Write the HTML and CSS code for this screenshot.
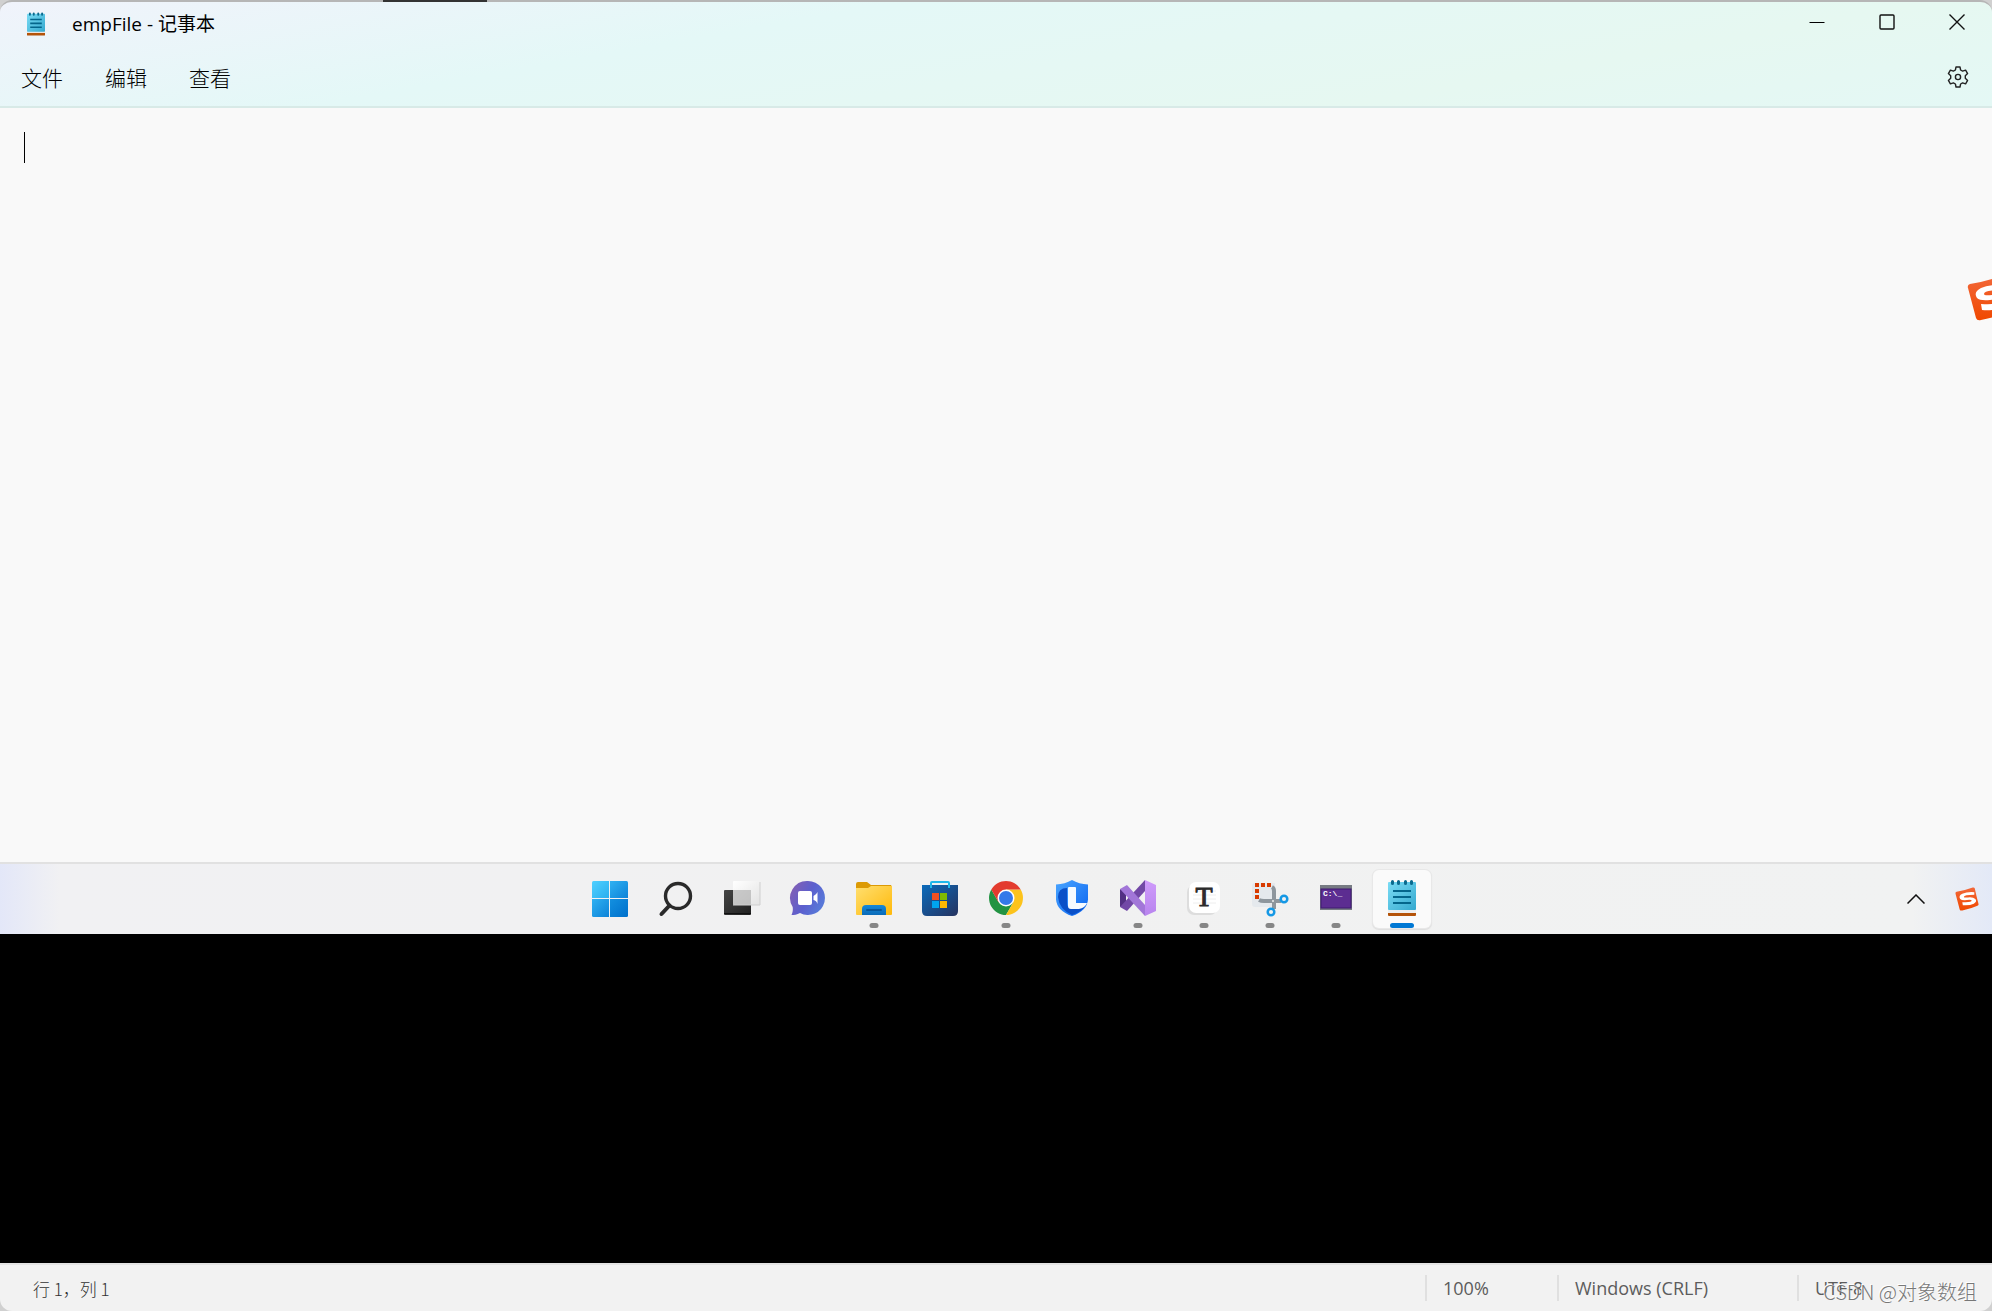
FILE: index.html
```html
<!DOCTYPE html>
<html lang="zh-CN">
<head>
  <meta charset="UTF-8" />
  <meta name="viewport" content="width=device-width, initial-scale=1" />
  <title>empFile - 记事本</title>
  <link rel="stylesheet" href="styles.css">
</head>
<body>

  <div class="desktop-peek"></div>

  <div class="window">
    <header class="header">
      <div class="titlebar">
        <svg class="app-icon" viewBox="0 0 28 36" aria-hidden="true">
          <rect x="0" y="31" width="28" height="5" rx="1" fill="#b45309"/>
          <rect x="0" y="28" width="28" height="4" fill="#e9e4e0"/>
          <rect x="0" y="2" width="28" height="28" rx="1" fill="url(#noteBlue)"/>
          <path d="M4.500 1.500v2M10.500 1.500v2M17.500 1.500v2M23.500 1.500v2" stroke="#0b6a8e" stroke-width="3" stroke-linecap="round"/>
          <path d="M5 11h18M5 17h18M5 23h18" stroke="#04668c" stroke-width="2.500"/>
        </svg>
        <span class="title">empFile - 记事本</span>
        <div class="controls">
          <button class="control" aria-label="最小化">
            <svg width="16" height="16" viewBox="0 0 16 16"><path d="M0.500 8.500h15" stroke="#000"/></svg>
          </button>
          <button class="control" aria-label="最大化">
            <svg width="16" height="16" viewBox="0 0 16 16"><rect x="1" y="1" width="14" height="14" rx="1" fill="none" stroke="#111" stroke-width="1.400"/></svg>
          </button>
          <button class="control" aria-label="关闭">
            <svg width="16" height="16" viewBox="0 0 16 16"><path d="M0.500 0.500l15 15M15.500 0.500l-15 15" stroke="#111" stroke-width="1.400"/></svg>
          </button>
        </div>
      </div>
      <nav class="menubar">
        <button class="menu">文件</button>
        <button class="menu">编辑</button>
        <button class="menu">查看</button>
        <button class="settings" aria-label="设置">
          <svg width="22" height="22" viewBox="0 0 22 22" fill="none" stroke="#222" stroke-width="1.400" stroke-linejoin="round">
            <path d="M9 1h4l.6 3 2 1.100 3-1 2 3.500-2.300 2.100v2.600l2.300 2.100-2 3.500-3-1-2 1.100L13 21H9l-.6-3-2-1.100-3 1-2-3.500 2.300-2.100V9.700L1.400 7.600l2-3.500 3 1 2-1.100z"/>
            <circle cx="11" cy="11" r="2.600"/>
          </svg>
        </button>
      </nav>
    </header>

    <main class="editor">
      <span class="caret"></span>
      <textarea class="text" aria-label="文本编辑器" spellcheck="false"></textarea>
      <svg class="ime-float" viewBox="0 0 46 46" aria-hidden="true"><use href="#sogou"/></svg>
    </main>

    <div class="taskbar">
      <div class="apps">
        <button class="app" aria-label="开始">
          <svg viewBox="0 0 36 36">
            <path d="M0 1.500Q0 0 1.500 0H17v17H0z" fill="url(#win1)"/>
            <path d="M18 0h16.500Q36 0 36 1.500V17H18z" fill="url(#win2)"/>
            <path d="M0 18h17v18H1.500Q0 36 0 34.500z" fill="url(#win2)"/>
            <path d="M18 18h18v16.500q0 1.500-1.500 1.500H18z" fill="url(#win3)"/>
          </svg>
        </button>
        <button class="app" aria-label="搜索">
          <svg viewBox="0 0 36 36" fill="none" stroke="#2a2a2a">
            <circle cx="20" cy="15" r="12.500" stroke-width="3.400"/>
            <path d="M11.500 24.500L3.500 33" stroke-width="4" stroke-linecap="round"/>
          </svg>
        </button>
        <button class="app" aria-label="任务视图">
          <svg viewBox="0 0 36 36">
            <rect x="0" y="9" width="27" height="25" rx="1" fill="url(#taskDark)"/>
            <path d="M0 32.500h27" stroke="#111"/>
            <rect x="9" y="0" width="27" height="24" rx="1" fill="url(#taskLight)"/>
            <path d="M9 9h18v15H9z" fill="#999" opacity=".5"/>
            <path d="M9 24h27V1" fill="none" stroke="#cfcfcf"/>
          </svg>
        </button>
        <button class="app" aria-label="聊天">
          <svg viewBox="0 0 36 36">
            <path d="M18 0a17 17 0 1 1-8 32c-3 1.800-6 2-8.500 2 1.300-3 1.600-5 1.200-8A17 17 0 0 1 18 0z" fill="url(#chat)"/>
            <rect x="8" y="10" width="14" height="14" rx="2" fill="#fff"/>
            <path d="M23.500 15q3-1.500 4-4v12q-1-3.500-4-4z" fill="#fff"/>
          </svg>
        </button>
        <button class="app running" aria-label="文件资源管理器">
          <svg viewBox="0 0 36 36">
            <path d="M0 8V3q0-2 2-2h9l4 3h20l1 2v4z" fill="#dc9a05"/>
            <path d="M0 7h12l3-2h21v28q0 1-1 1H1q-1 0-1-1z" fill="url(#folder)"/>
            <path d="M6 34v-6q0-4 4-4h16q4 0 4 4v6z" fill="url(#folderBlue)"/>
            <path d="M11 29h14" stroke="#07579b" stroke-width="2" stroke-linecap="round"/>
          </svg>
        </button>
        <button class="app" aria-label="应用商店">
          <svg viewBox="0 0 36 36">
            <path d="M0 4h36v26q0 5-5 5H5q-5 0-5-5z" fill="url(#store)"/>
            <path d="M9 7V2q0-1 1-1h16q1 0 1 1v5" fill="none" stroke="#20b7ea" stroke-width="2"/>
            <path d="M10 12h7v7h-7z" fill="#f25022"/>
            <path d="M18 12h7v7h-7z" fill="#7fba00"/>
            <path d="M10 20h7v7h-7z" fill="#00a4ef"/>
            <path d="M18 20h7v7h-7z" fill="#ffb900"/>
          </svg>
        </button>
        <button class="app running" aria-label="Chrome">
          <svg viewBox="0 0 36 36">
            <path d="M3.300 8.500L10.600 21.300 18 17l7.400 4.200L18 34A17 17 0 0 1 3.300 8.500z" fill="#229342"/>
            <path d="M25.400 21.200L18 34A17 17 0 0 0 32.700 8.500H18V17z" fill="#fcc31c"/>
            <path d="M18 17L10.500 21.300 3.300 8.500A17 17 0 0 1 32.700 8.500H18z" fill="#e33b2e"/>
            <circle cx="18" cy="17" r="8.500" fill="#fff"/>
            <circle cx="18" cy="17" r="7" fill="#3479e9"/>
          </svg>
        </button>
        <button class="app" aria-label="电脑管家">
          <svg viewBox="0 0 36 36">
            <path d="M18-1q7 4 16 4.500v15Q33 30 18 35 3 30 2 18.500v-15Q11 3 18-1z" fill="url(#shield)"/>
            <path d="M13 7Q4 7 4 16q1 12 14 18 10-3 14-11l-14 4q-5 1-5-5z" fill="#0a50c8"/>
            <path d="M14 7q0-1 1-1h6q1 0 1 1v15h11q-2 5-8 6h-8q-3 0-3-3z" fill="#f5faff"/>
          </svg>
        </button>
        <button class="app running" aria-label="Visual Studio">
          <svg viewBox="0 0 36 36">
            <path d="M0 8l6 3v13l-6 2z" fill="#533083"/>
            <path d="M0 26L25-1v11L7 30z" fill="#7248a6"/>
            <path d="M0 8l7-4 18 20v11z" fill="#a276d8"/>
            <path d="M25-1l11 5v26l-11 5z" fill="url(#vs)"/>
          </svg>
        </button>
        <button class="app running" aria-label="Typora">
          <svg viewBox="0 0 36 36">
            <rect x="1" y="4" width="30" height="30" rx="7" fill="#ddd"/>
            <rect x="3" y="1" width="31" height="31" rx="7" fill="#fff"/>
            <path d="M7 10h23M7 14h23M7 18h23M7 22h23" stroke="#eee"/>
            <text class="glyph" x="18" y="25" text-anchor="middle">T</text>
          </svg>
        </button>
        <button class="app running" aria-label="截图工具">
          <svg viewBox="0 0 36 36">
            <path d="M0 5q0-3 3-3h20v24H3q-3 0-3-3z" fill="#e5e9ed"/>
            <path d="M3 2h4v4H3zM9 2h4v4H9zM15 2h4v4h-4zM3 8h4v4H3zM3 14h4v4H3z" fill="#d83b01"/>
            <path d="M20 6q2 1 2 4v18M7 19q2 1 5 1h17" fill="none" stroke="#8e969d" stroke-width="4"/>
            <circle cx="21" cy="20" r="1" fill="#eee"/>
            <circle cx="32" cy="18" r="3.300" fill="none" stroke="#1598e5" stroke-width="2.500"/>
            <circle cx="19" cy="31" r="3.300" fill="none" stroke="#1598e5" stroke-width="2.500"/>
          </svg>
        </button>
        <button class="app running" aria-label="命令提示符">
          <svg viewBox="0 0 36 36">
            <rect x="2" y="4" width="32" height="25" fill="#777b83"/>
            <rect x="3" y="8" width="30" height="19" fill="#5c2d91" stroke="#3e1b70"/>
            <text class="prompt" x="5" y="15">C:\_</text>
          </svg>
        </button>
        <button class="app running active" aria-label="记事本">
          <svg viewBox="-4 0 36 36">
            <rect x="0" y="30" width="28" height="5" rx="1" fill="#b45309"/>
            <rect x="0" y="28" width="28" height="4" fill="#eee"/>
            <rect x="0" y="1" width="28" height="28" rx="1" fill="url(#noteBlue)"/>
            <path d="M4.500 0.500v2M10.500 0.500v2M17.500 0.500v2M23.500 0.500v2" stroke="#0b6a8e" stroke-width="3" stroke-linecap="round"/>
            <path d="M5 10h18M5 16h18M5 22h18" stroke="#04668c" stroke-width="2"/>
          </svg>
        </button>
      </div>
      <div class="tray">
        <button class="tray-item" aria-label="显示隐藏的图标">
          <svg width="18" height="10" viewBox="0 0 18 10"><path d="M0.500 9.500L9 1l8.500 8.500" fill="none" stroke="#111" stroke-width="1.500"/></svg>
        </button>
        <button class="tray-item" aria-label="搜狗输入法">
          <svg width="24" height="24" viewBox="0 0 46 46"><use href="#sogou"/></svg>
        </button>
      </div>
    </div>

    <div class="blank"></div>

    <footer class="statusbar">
      <span class="position">行 1，列 1</span>
      <span class="cell zoom">100%</span>
      <span class="cell eol">Windows (CRLF)</span>
      <span class="cell encoding">UTF-8</span>
    </footer>
  </div>

  <div class="watermark">CSDN @对象数组</div>

  <!-- shared gradients and the input method logo -->
  <svg class="defs" width="0" height="0" aria-hidden="true">
    <defs>
      <linearGradient id="noteBlue" x1="0" y1="0" x2="1" y2="1"><stop stop-color="#7adcf5"/><stop offset="1" stop-color="#35a9cf"/></linearGradient>
      <linearGradient id="win1" x1="0" y1="0" x2="1" y2="1"><stop stop-color="#4fd0ff"/><stop offset="1" stop-color="#2aaeee"/></linearGradient>
      <linearGradient id="win2" x1="0" y1="0" x2="1" y2="1"><stop stop-color="#2fb1f2"/><stop offset="1" stop-color="#0d83d8"/></linearGradient>
      <linearGradient id="win3" x1="0" y1="0" x2="1" y2="1"><stop stop-color="#1390e0"/><stop offset="1" stop-color="#0070cb"/></linearGradient>
      <linearGradient id="taskDark" x1="0" y1="0" x2="1" y2="1"><stop stop-color="#454545"/><stop offset="1" stop-color="#202020"/></linearGradient>
      <linearGradient id="taskLight" x1="0" y1="0" x2="1" y2="1"><stop stop-color="#fff"/><stop offset="1" stop-color="#e3e3e3"/></linearGradient>
      <linearGradient id="chat" x1="0" y1="0" x2="1" y2="0.500"><stop stop-color="#8a5fb0"/><stop offset="0.600" stop-color="#5b5fce"/><stop offset="1" stop-color="#5878d8"/></linearGradient>
      <linearGradient id="folder" x1="0" y1="0" x2="1" y2="1"><stop stop-color="#ffdf70"/><stop offset="1" stop-color="#ffb90a"/></linearGradient>
      <linearGradient id="folderBlue" x1="0" y1="0" x2="0" y2="1"><stop stop-color="#1588d8"/><stop offset="1" stop-color="#0b6bb8"/></linearGradient>
      <linearGradient id="store" x1="0" y1="0" x2="1" y2="1"><stop stop-color="#0b6bbb"/><stop offset="1" stop-color="#26335f"/></linearGradient>
      <linearGradient id="shield" x1="0" y1="0" x2="1" y2="1"><stop stop-color="#4aa5ff"/><stop offset="1" stop-color="#0a64f0"/></linearGradient>
      <linearGradient id="vs" x1="0" y1="0" x2="0" y2="1"><stop stop-color="#cf9bfb"/><stop offset="1" stop-color="#b884ee"/></linearGradient>
      <linearGradient id="orange" x1="0" y1="0" x2="0" y2="1"><stop stop-color="#f2683a"/><stop offset="1" stop-color="#f04800"/></linearGradient>
      <g id="sogou">
        <path d="M3 9Q18 7 34 1q3-1 4 2 3 15 7 29 1 3-2 4-13 6-29 9-4 1-5-2Q5 28 1 13q-1-3 2-4z" fill="url(#orange)"/>
        <path d="M37 10Q23 9 14 13q-8 4-4 10 3 3 13 2 8-1 9 1 0 4-18 3l1 6q13 1 21-3 7-4 3-9-4-4-14-3-8 1-8-1 0-4 20-4z" fill="#fff"/>
      </g>
    </defs>
  </svg>

</body>
</html>
```
FILE: styles.css
```css
* {
  box-sizing: border-box;
}
body {
  margin: 0;
  height: 100vh;
  position: relative;
  overflow: hidden;
  background: #d0d0d0;
  font-family: "Open Sans", "Noto Sans CJK SC", sans-serif;
  font-size: 18px;
  color: #000;
}
button {
  padding: 0;
  border: none;
  background: none;
  font: inherit;
  color: inherit;
}
svg {
  display: block;
}
.desktop-peek {
  position: absolute;
  z-index: 1;
  top: 0;
  left: 383px;
  width: 104px;
  height: 2px;
  background: #333;
}
.window {
  display: flex;
  flex-direction: column;
  height: 100%;
  overflow: hidden;
  border-top: 2px solid #b6b6b6;
  border-radius: 12px;
}

/* title and menu */
.header {
  height: 106px;
  border-bottom: 2px solid #d8eae7;
  background: linear-gradient(170deg, #f0f3fb 0%, #e4f8f7 35%, #e6f8f1 75%, #e4f8f5 100%);
}
.titlebar {
  display: flex;
  align-items: center;
  height: 44px;
  padding-left: 27px;
}
.app-icon {
  width: 18px;
  height: 24px;
}
.title {
  margin-left: 27px;
  font-size: 19px;
  line-height: 24px;
}
.controls {
  display: flex;
  align-self: stretch;
  margin-left: auto;
}
.control {
  display: grid;
  place-items: center;
  width: 70px;
  height: 40px;
}
.menubar {
  display: flex;
  align-items: center;
  height: 62px;
  font-size: 21px;
  font-weight: 300;
  color: #000;
}
.menu {
  width: 84px;
}
.settings {
  display: grid;
  place-items: center;
  width: 68px;
  height: 40px;
  margin-left: auto;
}

/* text area, 48px of its height is padding */
.editor {
  position: relative;
  display: flex;
  flex: 706;
  padding: 24px;
  background: #f9f9f9;
}
.caret {
  width: 1px;
  height: 31px;
  background: #000;
}
.text {
  flex: 1;
  padding: 0;
  border: none;
  outline: none;
  resize: none;
  background: none;
  font: inherit;
}
.ime-float {
  position: absolute;
  top: 167px;
  right: -21px;
  width: 46px;
  height: 46px;
}

/* taskbar */
.taskbar {
  display: grid;
  grid-template-columns: 1fr auto 1fr;
  align-items: center;
  height: 72px;
  padding-left: 20px;
  border-top: 2px solid #e1e1e1;
  background: linear-gradient(90deg, #e3e7f8 0%, #f1f1f3 3%, #f1f1f1 50%, #f1f2f2 96%, #e3e9f7 100%);
}
.apps {
  display: flex;
  grid-column: 2;
  gap: 8px;
}
.app {
  position: relative;
  display: grid;
  place-items: center;
  width: 58px;
  height: 58px;
}
.app svg {
  width: 36px;
  height: 36px;
  overflow: visible;
}
.app.running::after {
  content: "";
  position: absolute;
  bottom: 0;
  left: 50%;
  width: 9px;
  height: 5px;
  border-radius: 3px;
  background: #868686;
  transform: translateX(-50%);
}
.app.active {
  border-radius: 6px;
  background: #fafafa;
  box-shadow: 0 0 0 1px #e8e8e8, 0 1px 1px 1px #ddd;
}
.app.active::after {
  width: 24px;
  background: #0078d4;
}
.glyph {
  font: 28px "Liberation Serif", serif;
  fill: #2b2b2b;
  stroke: #2b2b2b;
}
.prompt {
  font: bold 8px "Liberation Mono", monospace;
  fill: #fff;
}
.tray {
  display: flex;
  justify-content: flex-end;
}
.tray-item {
  display: grid;
  place-items: center;
  width: 51px;
  height: 40px;
}

.blank {
  flex: 329;
  background: #000;
}

/* status bar */
.statusbar {
  display: flex;
  align-items: center;
  height: 48px;
  padding-left: 33px;
  border-top: 2px solid #e4e4e4;
  background: #f2f2f2;
  color: #5c5c5c;
}
.position {
  flex: 1;
  font-family: "Noto Sans CJK SC", sans-serif;
  font-size: 17px;
  font-weight: 300;
  color: #333;
}
.cell {
  height: 26px;
  padding-left: 16px;
  border-left: 2px solid #e0e0e0;
  line-height: 26px;
}
.zoom {
  width: 132px;
}
.eol {
  width: 240px;
}
.encoding {
  width: 195px;
}
.watermark {
  position: absolute;
  right: 15px;
  bottom: 5px;
  font-family: "Noto Sans CJK SC", sans-serif;
  font-size: 20px;
  font-weight: 300;
  color: #777;
  text-shadow: -1px -1px 0 #fff;
}
.defs {
  position: absolute;
}
```
